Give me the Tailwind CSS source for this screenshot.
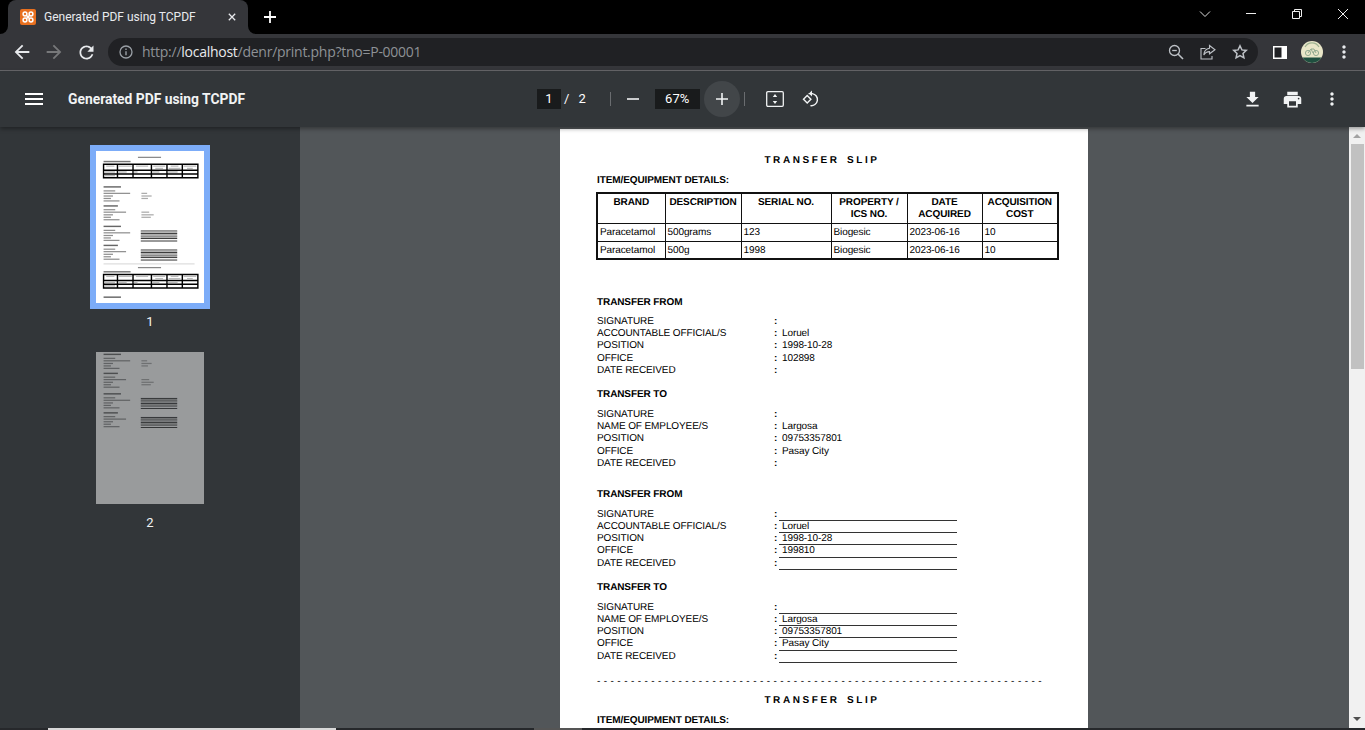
<!DOCTYPE html>
<html lang="en">
<head>
  <meta charset="UTF-8">
  <title>Generated PDF using TCPDF</title>
  <script src="https://cdn.jsdelivr.net/npm/@tailwindcss/browser@4"></script>
</head>
<body class="bg-black font-['Roboto',sans-serif]">
  <div class="w-[1365px] h-[730px] overflow-hidden flex flex-col">

    <!-- Tab strip -->
    <div class="h-[34px] bg-black flex shrink-0">
      <div class="relative ml-[8px] w-[240px] h-[34px] bg-[#35363a] rounded-t-lg flex items-center text-white">
        <span class="absolute -left-2 bottom-0 w-2 h-2 bg-[#35363a]"><span class="block w-2 h-2 bg-black rounded-br-lg"></span></span>
        <span class="absolute -right-2 bottom-0 w-2 h-2 bg-[#35363a]"><span class="block w-2 h-2 bg-black rounded-bl-lg"></span></span>
        <svg class="ml-[12px] w-4 h-4" viewBox="0 0 16 16">
          <rect width="16" height="16" rx="2" fill="#e8701f"/>
          <g fill="none" stroke="#fff" stroke-width="1.5">
            <circle cx="5" cy="5" r="1.9"/><circle cx="11" cy="5" r="1.9"/><circle cx="5" cy="11" r="1.9"/><circle cx="11" cy="11" r="1.9"/>
            <path d="M6.5 6.5l3 3M9.5 6.5l-3 3"/>
          </g>
        </svg>
        <span class="ml-[8px] text-[12px] font-['Roboto',sans-serif] text-[#e8eaed] whitespace-nowrap">Generated PDF using TCPDF</span>
        <svg class="absolute left-[220px] top-[13px] w-[8px] h-[8px]" viewBox="0 0 10 10"><path d="M1 1l8 8M9 1l-8 8" stroke="#e8eaed" stroke-width="1.6"/></svg>
      </div>
      <svg class="ml-[15px] mt-[10px] w-[14px] h-[14px]" viewBox="0 0 14 14"><path d="M7 1v12M1 7h12" stroke="#fff" stroke-width="1.8"/></svg>
      <div class="ml-auto flex items-start pt-[8px]">
        <svg class="w-[12px] h-[12px] mr-[34px]" viewBox="0 0 12 12"><path d="M1 3.500l5 5 5-5" fill="none" stroke="#ddd" stroke-width="1"/></svg>
        <svg class="w-[12px] h-[12px] mr-[34px]" viewBox="0 0 12 12"><path d="M1 5.500h10" stroke="#eee" stroke-width="1"/></svg>
        <svg class="w-[12px] h-[12px] mr-[34px]" viewBox="0 0 12 12"><path d="M1.500 3.500h7v7h-7zM3.500 3.500v-2h7v7h-2" fill="none" stroke="#eee" stroke-width="1"/></svg>
        <svg class="w-[12px] h-[12px] mr-[16px]" viewBox="0 0 12 12"><path d="M1 1l10 10M11 1L1 11" stroke="#eee" stroke-width="1"/></svg>
      </div>
    </div>

    <!-- Browser toolbar -->
    <div class="h-[37px] bg-[#35363a] border-b border-[#66676a] flex items-center shrink-0 pl-[6px]">
      <span class="w-8 h-8 flex items-center justify-center"><svg class="w-[22px] h-[22px]" viewBox="0 0 24 24" fill="#e8eaed"><path d="M20 11H7.830l5.590-5.590L12 4l-8 8 8 8 1.410-1.410L7.830 13H20v-2z"/></svg></span>
      <span class="w-8 h-8 flex items-center justify-center"><svg class="w-[22px] h-[22px]" viewBox="0 0 24 24" fill="#77787a"><path d="M4 11h12.170l-5.590-5.590L12 4l8 8-8 8-1.410-1.410L16.170 13H4v-2z"/></svg></span>
      <span class="w-8 h-8 flex items-center justify-center"><svg class="w-[21px] h-[21px]" viewBox="0 0 24 24" fill="#e8eaed"><path d="M17.650 6.350C16.200 4.900 14.210 4 12 4c-4.420 0-7.990 3.580-7.990 8s3.570 8 7.990 8c3.730 0 6.840-2.550 7.730-6h-2.080c-.82 2.330-3.040 4-5.650 4-3.310 0-6-2.690-6-6s2.690-6 6-6c1.660 0 3.140.69 4.220 1.780L13 11h7V4l-2.350 2.350z"/></svg></span>
      <div class="ml-[6px] w-[1150px] h-[28px] bg-[#202124] rounded-full flex items-center pr-[2px]">
        <svg class="ml-[11px] w-[14px] h-[14px]" viewBox="0 0 14 14" fill="none"><circle cx="7" cy="7" r="6" stroke="#9aa0a6" stroke-width="1.3"/><path d="M7 6.200v4M7 3.600v1.400" stroke="#9aa0a6" stroke-width="1.4"/></svg>
        <span class="ml-[9px] text-[14px] leading-[28px] font-['Open_Sans',sans-serif] tracking-[-0.26px] text-[#8e9296] whitespace-nowrap">http://<span class="text-[#e8eaed]">localhost</span>/denr/print.php?tno=P-00001</span>
        <span class="ml-auto w-8 h-7 flex items-center justify-center"><svg class="w-[16px] h-[16px]" viewBox="0 0 16 16" fill="none" stroke="#bdc1c6" stroke-width="1.3"><circle cx="6.500" cy="6.500" r="5"/><path d="M10 10l5 5" stroke-width="1.600"/><path d="M4.200 6.500h4.600"/></svg></span>
        <span class="w-8 h-7 flex items-center justify-center"><svg class="w-[16px] h-[16px]" viewBox="0 0 16 16" fill="none" stroke="#bdc1c6" stroke-width="1.100"><path d="M5.500 4.500H1v10.500h11v-3"/><path d="M9.500 1.500L15 5.800l-5.500 4V7.600C7 7.600 5 8.800 3.800 11c.2-3.500 2.500-6.200 5.700-6.700z"/></svg></span>
        <span class="w-8 h-7 flex items-center justify-center"><svg class="w-[16px] h-[16px]" viewBox="0 0 16 16" fill="none" stroke="#bdc1c6" stroke-width="1.500"><path d="M8 1.800l1.900 4.100 4.400.5-3.300 3 .9 4.400L8 11.600l-3.900 2.200.9-4.400-3.300-3 4.400-.5z"/></svg></span>
      </div>
      <span class="ml-[6px] w-8 h-8 flex items-center justify-center"><svg class="w-[14px] h-[13px]" viewBox="0 0 14 13"><rect width="14" height="13" fill="#fff"/><rect x="1.500" y="1.500" width="7" height="10" fill="#202124"/></svg></span>
      <span class="w-8 h-8 flex items-center justify-center">
        <svg class="w-[22px] h-[22px]" viewBox="0 0 22 22">
          <circle cx="11" cy="11" r="11" fill="#e9e6c8"/>
          <path d="M1.500 16.500h19A11 11 0 0 1 1.500 16.500z" fill="#1f4f3f"/>
          <g fill="none" stroke="#8aa58b" stroke-width=".9"><circle cx="7" cy="12" r="2.600"/><circle cx="15" cy="12" r="2.600"/><path d="M7 12l3-4h3l2 4M10 8l2 4"/></g>
          <path d="M4 6a8 8 0 0 1 14 0" fill="none" stroke="#9fb392" stroke-width="1.200"/>
        </svg>
      </span>
      <span class="w-8 h-8 flex items-center justify-center"><svg class="w-[20px] h-[20px]" viewBox="0 0 24 24" fill="#e8eaed"><path d="M12 8c1.100 0 2-.9 2-2s-.9-2-2-2-2 .9-2 2 .9 2 2 2zm0 2c-1.100 0-2 .9-2 2s.9 2 2 2 2-.9 2-2-.9-2-2-2zm0 6c-1.100 0-2 .9-2 2s.9 2 2 2 2-.9 2-2-.9-2-2-2z"/></svg></span>
    </div>

    <!-- PDF viewer toolbar -->
    <div class="relative z-10 h-[56px] bg-[#323639] flex items-center shrink-0 text-white shadow-[0_2px_4px_rgba(0,0,0,0.35)]">
      <div class="w-[537px] flex items-center shrink-0">
        <svg class="ml-[22px] w-6 h-6" viewBox="0 0 24 24" fill="#fff"><path d="M3 18h18v-2H3v2zm0-5h18v-2H3v2zm0-7v2h18V6H3z"/></svg>
        <span class="ml-[22px] text-[13.85px] font-bold text-[#f1f3f4] whitespace-nowrap">Generated PDF using TCPDF</span>
      </div>
      <span class="w-6 h-5 bg-[#191b1c] text-[13px] leading-5 text-center">1</span>
      <span class="ml-[3px] text-[13px]">/</span>
      <span class="ml-[9px] text-[13px]">2</span>
      <span class="ml-[24px] w-px h-[14px] bg-[#6a6d70]"></span>
      <span class="ml-[4px] w-9 h-9 flex items-center justify-center"><svg class="w-[12px] h-[12px]" viewBox="0 0 12 12"><path d="M0 6h12" stroke="#f1f3f4" stroke-width="1.600"/></svg></span>
      <span class="ml-[4px] w-[45px] h-5 bg-[#191b1c] text-[13px] leading-5 text-center">67%</span>
      <span class="ml-[4px] w-9 h-9 rounded-full bg-[#424649] flex items-center justify-center"><svg class="w-[12px] h-[12px]" viewBox="0 0 12 12"><path d="M0 6h12M6 0v12" stroke="#f1f3f4" stroke-width="1.600"/></svg></span>
      <span class="ml-[4px] w-px h-[14px] bg-[#6a6d70]"></span>
      <span class="ml-[12px] w-9 h-9 flex items-center justify-center"><svg class="w-[18px] h-[16px]" viewBox="0 0 18 16" fill="none"><rect x=".7" y=".7" width="16.600" height="14.600" rx="1.200" stroke="#f1f3f4" stroke-width="1.300"/><path d="M9 3l2.200 3H6.800zM9 13l-2.200-3h4.400z" fill="#f1f3f4"/></svg></span>
      <span class="w-9 h-9 flex items-center justify-center"><svg class="w-[18px] h-[18px]" viewBox="0 0 18 18" fill="none" stroke="#f1f3f4" stroke-width="1.400"><path d="M5.200 5.600L1.500 9.300l3.700 3.700 3.700-3.700z"/><path d="M6.500 3.600h3.800a6 6 0 1 1-1.900 12"/><path d="M10 .6L6.900 3.600 10 6.600" fill="#f1f3f4" stroke="none"/></svg></span>
      <div class="ml-auto flex items-center pr-[13px]">
        <span class="w-10 h-10 flex items-center justify-center"><svg class="w-[21px] h-[21px]" viewBox="0 0 24 24" fill="#f1f3f4"><path d="M19 9h-4V3H9v6H5l7 7 7-7zM5 18v2h14v-2H5z"/></svg></span>
        <span class="w-10 h-10 flex items-center justify-center"><svg class="w-[21px] h-[21px]" viewBox="0 0 24 24" fill="#f1f3f4"><path d="M19 8H5c-1.660 0-3 1.340-3 3v6h4v4h12v-4h4v-6c0-1.660-1.340-3-3-3zm-3 11H8v-5h8v5zm3-7c-.55 0-1-.45-1-1s.45-1 1-1 1 .45 1 1-.45 1-1 1zm-1-9H6v4h12V3z"/></svg></span>
        <span class="w-10 h-10 flex items-center justify-center"><svg class="w-5 h-5" viewBox="0 0 24 24" fill="#f1f3f4"><path d="M12 8c1.100 0 2-.9 2-2s-.9-2-2-2-2 .9-2 2 .9 2 2 2zm0 2c-1.100 0-2 .9-2 2s.9 2 2 2 2-.9 2-2-.9-2-2-2zm0 6c-1.100 0-2 .9-2 2s.9 2 2 2 2-.9 2-2-.9-2-2-2z"/></svg></span>
      </div>
    </div>

    <!-- Viewer body -->
    <div class="flex-1 flex min-h-0">

      <!-- Thumbnails -->
      <div class="w-[300px] bg-[#323639] flex flex-col items-center shrink-0 pt-[18px]">
        <div class="w-[120px] h-[164px] bg-[#7cacf8] p-[6px]">
          <div class="w-[108px] h-[152px] bg-white overflow-hidden">
            <svg class="w-[108px] h-[152px] block blur-[0.45px]" viewBox="0 0 528 743">
              <defs>
                <g id="slip">
                  <rect x="205" y="28" width="113" height="6" fill="#888"/>
                  <rect x="37" y="48" width="132" height="7" fill="#777"/>
                  <path d="M37 64.500h461v66H37zM37 94h461M37 112h461M105 64.500v66M181 64.500v66M271 64.500v66M347 64.500v66M422 64.500v66" fill="none" stroke="#000" stroke-width="7"/>
                  <g fill="#bbb"><rect x="50" y="71" width="40" height="6"/><rect x="110" y="71" width="65" height="6"/><rect x="195" y="71" width="60" height="6"/><rect x="280" y="71" width="58" height="6"/><rect x="290" y="82" width="38" height="6"/><rect x="365" y="71" width="38" height="6"/><rect x="355" y="82" width="58" height="6"/><rect x="428" y="71" width="62" height="6"/><rect x="445" y="82" width="28" height="6"/><rect x="41" y="99" width="52" height="7"/><rect x="110" y="99" width="40" height="7"/><rect x="41" y="117" width="52" height="7"/><rect x="185" y="99" width="18" height="7"/><rect x="275" y="99" width="35" height="7"/><rect x="351" y="99" width="48" height="7"/></g>
                </g>
                <g id="labels" fill="#8f8f8f">
                  <rect x="37" y="0" width="85" height="7" fill="#666"/>
                  <rect x="37" y="20" width="57" height="6"/><rect x="37" y="32" width="130" height="6"/><rect x="37" y="45" width="46" height="6"/><rect x="37" y="57" width="36" height="6"/><rect x="37" y="69" width="78" height="6"/>
                  <rect x="37" y="93" width="70" height="7" fill="#666"/>
                  <rect x="37" y="112" width="57" height="6"/><rect x="37" y="124" width="110" height="6"/><rect x="37" y="137" width="46" height="6"/><rect x="37" y="149" width="36" height="6"/><rect x="37" y="161" width="78" height="6"/>
                </g>
                <g id="plain">
                  <use href="#labels"/>
                  <g fill="#aaa"><rect x="222" y="32" width="28" height="6"/><rect x="222" y="45" width="50" height="6"/><rect x="222" y="57" width="32" height="6"/><rect x="222" y="124" width="38" height="6"/><rect x="222" y="137" width="60" height="6"/><rect x="222" y="149" width="46" height="6"/></g>
                </g>
                <g id="lined">
                  <use href="#labels"/>
                  <path d="M219 26h178M219 38h178M219 51h178M219 63h178M219 75h178M219 119h178M219 131h178M219 144h178M219 156h178M219 168h178" stroke="#222" stroke-width="4.500"/>
                  <g fill="#aaa"><rect x="219" y="29" width="178" height="6"/><rect x="219" y="41" width="178" height="6"/><rect x="219" y="54" width="178" height="6"/><rect x="219" y="122" width="178" height="6"/><rect x="219" y="134" width="178" height="6"/><rect x="219" y="147" width="178" height="6"/></g>
                </g>
              </defs>
              <use href="#slip"/>
              <use href="#plain" y="172"/>
              <use href="#lined" y="365"/>
              <path d="M37 552h445" stroke="#bbb" stroke-width="3"/>
              <use href="#slip" y="539"/>
              <rect x="37" y="711" width="85" height="7" fill="#666"/>
            </svg>
          </div>
        </div>
        <span class="mt-[3px] h-[20px] text-[13px] leading-5 text-[#f1f3f4]">1</span>
        <div class="mt-[20px] w-[108px] h-[152px] bg-white overflow-hidden opacity-50">
          <svg class="w-[108px] h-[152px] block blur-[0.45px]" viewBox="0 0 528 743">
            <use href="#plain" y="8"/>
            <use href="#lined" y="201"/>
          </svg>
        </div>
        <span class="mt-[9px] h-[20px] text-[13px] leading-5 text-[#f1f3f4]">2</span>
      </div>

      <!-- Document -->
      <div class="flex-1 bg-[#525659] overflow-hidden pt-[2px]">
        <div class="ml-[260px] w-[528px] h-[640px] bg-white pl-[37px] pt-[26px] text-black font-['Liberation_Sans',sans-serif] text-[10px] tracking-[-0.1px] leading-[12px] [text-rendering:geometricPrecision]">
          <div class="w-[450px] text-center font-bold text-[10px] tracking-[2.6px] [word-spacing:2px]">TRANSFER SLIP</div>
          <div class="mt-[8px] font-bold">ITEM/EQUIPMENT DETAILS:</div>
          <table class="mt-[5px] -ml-px w-[462px] table-fixed border-collapse border-2 border-[#111]">
            <colgroup><col class="w-[68px]"><col class="w-[76px]"><col class="w-[90px]"><col class="w-[76px]"><col class="w-[75px]"><col class="w-[76px]"></colgroup>
            <tr class="h-[30px] font-bold text-center align-top">
              <td class="border border-[#111] pt-[3px]">BRAND</td>
              <td class="border border-[#111] pt-[3px]">DESCRIPTION</td>
              <td class="border border-[#111] pt-[3px]">SERIAL NO.</td>
              <td class="border border-[#111] pt-[3px]">PROPERTY /<br>ICS NO.</td>
              <td class="border border-[#111] pt-[3px]">DATE<br>ACQUIRED</td>
              <td class="border border-[#111] pt-[3px]">ACQUISITION<br>COST</td>
            </tr>
            <tr class="h-[18px]">
              <td class="border border-[#111] pl-[2px] pt-[2px]">Paracetamol</td>
              <td class="border border-[#111] pl-[2px] pt-[2px]">500grams</td>
              <td class="border border-[#111] pl-[2px] pt-[2px]">123</td>
              <td class="border border-[#111] pl-[2px] pt-[2px]">Biogesic</td>
              <td class="border border-[#111] pl-[2px] pt-[2px]">2023-06-16</td>
              <td class="border border-[#111] pl-[2px] pt-[2px]">10</td>
            </tr>
            <tr class="h-[18px]">
              <td class="border border-[#111] pl-[2px] pt-[2px]">Paracetamol</td>
              <td class="border border-[#111] pl-[2px] pt-[2px]">500g</td>
              <td class="border border-[#111] pl-[2px] pt-[2px]">1998</td>
              <td class="border border-[#111] pl-[2px] pt-[2px]">Biogesic</td>
              <td class="border border-[#111] pl-[2px] pt-[2px]">2023-06-16</td>
              <td class="border border-[#111] pl-[2px] pt-[2px]">10</td>
            </tr>
          </table>

          <div class="mt-[36.5px] font-bold">TRANSFER FROM</div>
          <div class="mt-[7.5px] grid grid-cols-[177px_5px_178px] auto-rows-[12.2px] leading-[12.2px]">
            <span>SIGNATURE</span><span class="font-bold">:</span><span></span>
            <span>ACCOUNTABLE OFFICIAL/S</span><span class="font-bold">:</span><span class="pl-[3px]">Loruel</span>
            <span>POSITION</span><span class="font-bold">:</span><span class="pl-[3px]">1998-10-28</span>
            <span>OFFICE</span><span class="font-bold">:</span><span class="pl-[3px]">102898</span>
            <span>DATE RECEIVED</span><span class="font-bold">:</span><span></span>
          </div>
          <div class="mt-[12.5px] font-bold">TRANSFER TO</div>
          <div class="mt-[7.5px] grid grid-cols-[177px_5px_178px] auto-rows-[12.2px] leading-[12.2px]">
            <span>SIGNATURE</span><span class="font-bold">:</span><span></span>
            <span>NAME OF EMPLOYEE/S</span><span class="font-bold">:</span><span class="pl-[3px]">Largosa</span>
            <span>POSITION</span><span class="font-bold">:</span><span class="pl-[3px]">09753357801</span>
            <span>OFFICE</span><span class="font-bold">:</span><span class="pl-[3px]">Pasay City</span>
            <span>DATE RECEIVED</span><span class="font-bold">:</span><span></span>
          </div>

          <div class="mt-[19.5px] font-bold">TRANSFER FROM</div>
          <div class="mt-[7.5px] grid grid-cols-[177px_5px_178px] auto-rows-[12.2px] leading-[12.2px]">
            <span>SIGNATURE</span><span class="font-bold">:</span><span class="border-b border-[#333]"></span>
            <span>ACCOUNTABLE OFFICIAL/S</span><span class="font-bold">:</span><span class="pl-[3px] border-b border-[#333]">Loruel</span>
            <span>POSITION</span><span class="font-bold">:</span><span class="pl-[3px] border-b border-[#333]">1998-10-28</span>
            <span>OFFICE</span><span class="font-bold">:</span><span class="pl-[3px] border-b border-[#333]">199810</span>
            <span>DATE RECEIVED</span><span class="font-bold">:</span><span class="border-b border-[#333]"></span>
          </div>
          <div class="mt-[12.5px] font-bold">TRANSFER TO</div>
          <div class="mt-[7.5px] grid grid-cols-[177px_5px_178px] auto-rows-[12.2px] leading-[12.2px]">
            <span>SIGNATURE</span><span class="font-bold">:</span><span class="border-b border-[#333]"></span>
            <span>NAME OF EMPLOYEE/S</span><span class="font-bold">:</span><span class="pl-[3px] border-b border-[#333]">Largosa</span>
            <span>POSITION</span><span class="font-bold">:</span><span class="pl-[3px] border-b border-[#333]">09753357801</span>
            <span>OFFICE</span><span class="font-bold">:</span><span class="pl-[3px] border-b border-[#333]">Pasay City</span>
            <span>DATE RECEIVED</span><span class="font-bold">:</span><span class="border-b border-[#333]"></span>
          </div>

          <div class="mt-[13.5px] h-[12px] whitespace-nowrap tracking-[0.34px]">- - - - - - - - - - - - - - - - - - - - - - - - - - - - - - - - - - - - - - - - - - - - - - - - - - - - - - - - - - - - - - - - - -</div>
          <div class="mt-[6.5px] w-[450px] text-center font-bold text-[10px] tracking-[2.6px] [word-spacing:2px]">TRANSFER SLIP</div>
          <div class="mt-[8px] font-bold">ITEM/EQUIPMENT DETAILS:</div>
        </div>
      </div>

      <!-- Scrollbar -->
      <div class="w-[16px] bg-[#f1f1f1] shrink-0 flex flex-col items-center pt-[2px]">
        <span class="w-0 h-0 mt-[5px] border-x-[4px] border-x-transparent border-b-[4px] border-b-[#a3a3a3]"></span>
        <span class="mt-[6px] self-start ml-[2px] w-[13px] h-[225px] bg-[#c1c1c1]"></span>
        <span class="mt-auto mb-[7px] w-0 h-0 border-x-[4px] border-x-transparent border-t-[4px] border-t-[#505050]"></span>
      </div>
    </div>

    <!-- Bottom edge -->
    <div class="h-[2px] bg-[#26282b] flex shrink-0">
      <span class="ml-[48px] w-[288px] bg-[#d8d8d8]"></span>
      <span class="ml-[198px] w-[48px] bg-[#555]"></span>
    </div>
  </div>
</body>
</html>
